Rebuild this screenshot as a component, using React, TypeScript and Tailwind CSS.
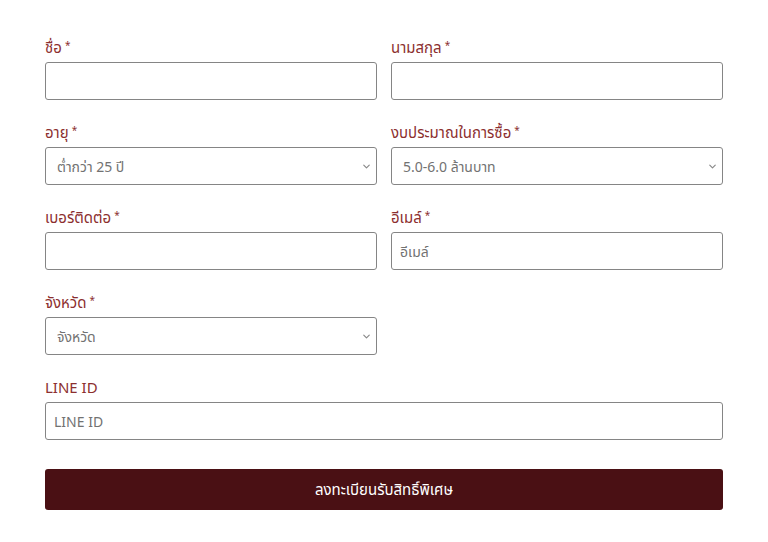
import { ChevronDown } from "lucide-react"

type FieldProps = {
  label: string
  required?: boolean
  children: React.ReactNode
  className?: string
}

function Field({ label, required, children, className = "" }: FieldProps) {
  return (
    <div className={`flex flex-col ${className}`}>
      <label className="mb-1 h-[22px] text-[15px] leading-[22px] text-[#8c2f2f]">
        {label}
        {required && <span className="ml-[3px] align-top text-[10px] leading-[18px]">*</span>}
      </label>
      {children}
    </div>
  )
}

function TextInput({ placeholder = "" }: { placeholder?: string }) {
  return (
    <input
      type="text"
      placeholder={placeholder}
      className="h-[38px] w-full rounded-[3px] border border-[#858585] bg-white px-2 text-[14px] text-[#444] outline-none placeholder:text-[#727272]"
    />
  )
}

function SelectInput({ value }: { value: string }) {
  return (
    <div className="relative">
      <select
        defaultValue={value}
        className="h-[38px] w-full appearance-none rounded-[3px] border border-[#858585] bg-white pl-[11px] pr-8 text-[14px] text-[#727272] outline-none"
      >
        <option>{value}</option>
      </select>
      <ChevronDown className="pointer-events-none absolute right-[5px] top-[14px] h-[11px] w-[11px] text-[#888]" strokeWidth={2.5} />
    </div>
  )
}

export default function App() {
  return (
    <div className="min-h-[542px] w-[768px] bg-white px-[45px] pt-[36px] font-['Noto_Sans','Noto_Sans_Thai',sans-serif]">
      <form className="grid grid-cols-2 gap-x-[14px] gap-y-[21px]">
        <Field label="ชื่อ" required>
          <TextInput />
        </Field>
        <Field label="นามสกุล" required>
          <TextInput />
        </Field>
        <Field label="อายุ" required>
          <SelectInput value="ต่ำกว่า 25 ปี" />
        </Field>
        <Field label="งบประมาณในการซื้อ" required>
          <SelectInput value="5.0-6.0 ล้านบาท" />
        </Field>
        <Field label="เบอร์ติดต่อ" required>
          <TextInput />
        </Field>
        <Field label="อีเมล์" required>
          <TextInput placeholder="อีเมล์" />
        </Field>
        <Field label="จังหวัด" required>
          <SelectInput value="จังหวัด" />
        </Field>
        <div />
        <Field label="LINE ID" className="col-span-2">
          <TextInput placeholder="LINE ID" />
        </Field>
        <button
          type="button"
          className="col-span-2 mt-[8px] h-[41px] rounded-[3px] bg-[#4a1014] text-[15px] text-white"
        >
          ลงทะเบียนรับสิทธิ์พิเศษ
        </button>
      </form>
    </div>
  )
}
